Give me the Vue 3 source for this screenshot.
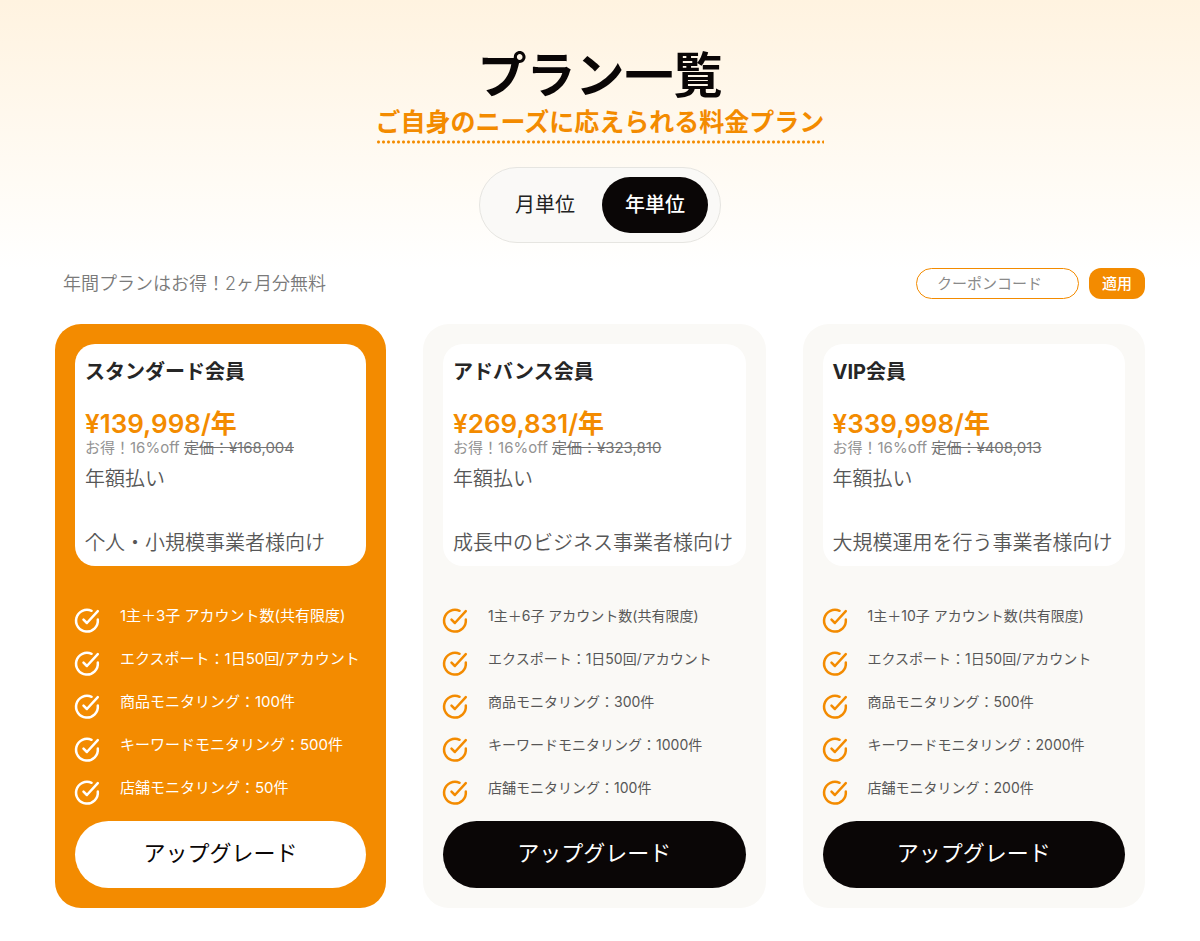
<script setup>
import { ref } from 'vue'

const period = ref('year')
const coupon = ref('')

const periods = [
  { id: 'month', label: '月単位' },
  { id: 'year', label: '年単位' }
]

const plans = [
  {
    name: 'スタンダード会員',
    price: '¥139,998/年',
    listPrice: '¥168,004',
    target: '个人・小規模事業者様向け',
    featured: true,
    features: [
      '1主＋3子 アカウント数(共有限度)',
      'エクスポート：1日50回/アカウント',
      '商品モニタリング：100件',
      'キーワードモニタリング：500件',
      '店舗モニタリング：50件'
    ]
  },
  {
    name: 'アドバンス会員',
    price: '¥269,831/年',
    listPrice: '¥323,810',
    target: '成長中のビジネス事業者様向け',
    features: [
      '1主＋6子 アカウント数(共有限度)',
      'エクスポート：1日50回/アカウント',
      '商品モニタリング：300件',
      'キーワードモニタリング：1000件',
      '店舗モニタリング：100件'
    ]
  },
  {
    name: 'VIP会員',
    price: '¥339,998/年',
    listPrice: '¥408,013',
    target: '大規模運用を行う事業者様向け',
    features: [
      '1主＋10子 アカウント数(共有限度)',
      'エクスポート：1日50回/アカウント',
      '商品モニタリング：500件',
      'キーワードモニタリング：2000件',
      '店舗モニタリング：200件'
    ]
  }
]
</script>

<template>
  <main class="pricing">
    <header class="head">
      <h1 class="title">プラン一覧</h1>
      <p class="subtitle">ご自身のニーズに応えられる料金プラン</p>
      <div class="toggle">
        <button
          v-for="p in periods"
          :key="p.id"
          type="button"
          class="toggle-btn"
          :class="{ active: period === p.id }"
          :aria-pressed="period === p.id"
          @click="period = p.id"
        >{{ p.label }}</button>
      </div>
    </header>

    <div class="bar">
      <p class="note">年間プランはお得！2ヶ月分無料</p>
      <form class="coupon" @submit.prevent>
        <input v-model="coupon" type="text" class="coupon-input" placeholder="クーポンコード" aria-label="クーポンコード">
        <button type="submit" class="coupon-btn">適用</button>
      </form>
    </div>

    <div class="plans">
      <section v-for="plan in plans" :key="plan.name" class="card" :class="{ featured: plan.featured }">
        <div class="summary">
          <h2 class="name">{{ plan.name }}</h2>
          <p class="price">{{ plan.price }}</p>
          <p class="discount">お得！16%off <s>定価：{{ plan.listPrice }}</s></p>
          <p class="billing">年額払い</p>
          <p class="target">{{ plan.target }}</p>
        </div>
        <ul class="features">
          <li v-for="feature in plan.features" :key="feature" class="feature">
            <svg class="check" viewBox="0 0 24 25" aria-hidden="true">
              <path d="M22.8 11.6A10.9 10.9 0 1 1 16.6 2.8" />
              <path d="M8.5 11.6 11.9 15 22.8 3.2" />
            </svg>
            <span>{{ feature }}</span>
          </li>
        </ul>
        <button type="button" class="upgrade">アップグレード</button>
      </section>
    </div>
  </main>
</template>

<style>
body {
  margin: 0;
  background: #fff;
}
</style>

<style scoped>
.pricing {
  box-sizing: border-box;
  padding: 46px 55px 33px;
  background: linear-gradient(#fff3e0, #fff 270px);
  color: #575757;
  font-family: Inter, "Noto Sans CJK JP", sans-serif;
}

h1, h2, p, ul {
  margin: 0;
  padding: 0;
}

button, input {
  font-family: inherit;
}

button {
  padding: 0;
  border: 0;
  cursor: pointer;
}

/* Heading */
.head {
  display: flex;
  flex-direction: column;
  align-items: center;
}

.title {
  color: #0a0606;
  font-size: 49px;
  font-weight: 600;
  line-height: 60px;
}

.subtitle {
  padding-bottom: 6px;
  background: radial-gradient(circle, #f38b00 1px, transparent 2px) left bottom / 5px 4px repeat-x;
  color: #f38b00;
  font-size: 25px;
  font-weight: 600;
  line-height: 32px;
}

.toggle {
  display: flex;
  gap: 4px;
  margin-top: 23px;
  padding: 9px 12px;
  border: 1px solid #e6e5e1;
  border-radius: 38px;
  background: #faf9f7;
}

.toggle-btn {
  padding: 0 23px;
  border-radius: 28px;
  background: transparent;
  color: #222;
  font-size: 20px;
  line-height: 56px;
}

.toggle-btn.active {
  background: #0a0606;
  color: #fff;
  font-weight: 500;
}

/* Note and coupon */
.bar {
  display: flex;
  align-items: center;
  justify-content: space-between;
  margin-top: 25px;
  padding-left: 8px;
}

.note {
  color: #7a7a7a;
  font-size: 18px;
  font-weight: 350;
  line-height: 28px;
}

.coupon {
  display: flex;
  gap: 10px;
}

.coupon-input {
  box-sizing: border-box;
  width: 163px;
  height: 31px;
  padding: 0 20px;
  border: 1px solid #f38b00;
  border-radius: 16px;
  background: #fff;
  color: #333;
  font-size: 15px;
}

.coupon-input::placeholder {
  color: #8a8a8a;
}

.coupon-btn {
  padding: 0 13px 2px;
  border-radius: 12px;
  background: #f38b00;
  color: #fff;
  font-size: 15px;
  font-weight: 500;
}

/* Plans */
.plans {
  display: grid;
  grid-template-columns: 29fr 30fr 30fr;
  gap: 37px;
  margin-top: 25px;
}

.card {
  display: flex;
  flex-direction: column;
  padding: 20px;
  border-radius: 26px;
  background: #faf9f6;
}

.summary {
  padding: 10px;
  border-radius: 20px;
  background: #fff;
  white-space: nowrap;
}

.name {
  color: #262626;
  font-size: 20px;
  font-weight: 700;
  line-height: 36px;
}

.price {
  margin-top: 18px;
  color: #f38b00;
  font-size: 26px;
  font-weight: 600;
  line-height: 32px;
}

.discount {
  color: #939393;
  font-size: 15px;
  line-height: 16px;
}

.discount s {
  color: #737373;
}

.billing {
  font-size: 20px;
  font-weight: 350;
  line-height: 46px;
}

.target {
  margin-top: 28px;
  font-size: 20px;
  font-weight: 350;
  line-height: 26px;
}

.features {
  margin-top: 40px;
  list-style: none;
  font-size: 14px;
  line-height: 20px;
  white-space: nowrap;
}

.feature {
  display: flex;
  gap: 21px;
  height: 43px;
}

.check {
  flex: none;
  width: 24px;
  height: 25px;
  margin-top: 2px;
  overflow: visible;
  fill: none;
  stroke: #f38b00;
  stroke-width: 2.5;
  stroke-linecap: round;
  stroke-linejoin: round;
}

.upgrade {
  padding-bottom: 3px;
  border-radius: 34px;
  background: #0a0606;
  color: #fff;
  font-size: 22px;
  line-height: 64px;
}

.featured {
  background: #f38b00;
}

.featured .features {
  color: #fff;
  font-size: 15px;
}

.featured .check {
  stroke: #fff;
}

.featured .upgrade {
  background: #fff;
  color: #0a0606;
}
</style>
